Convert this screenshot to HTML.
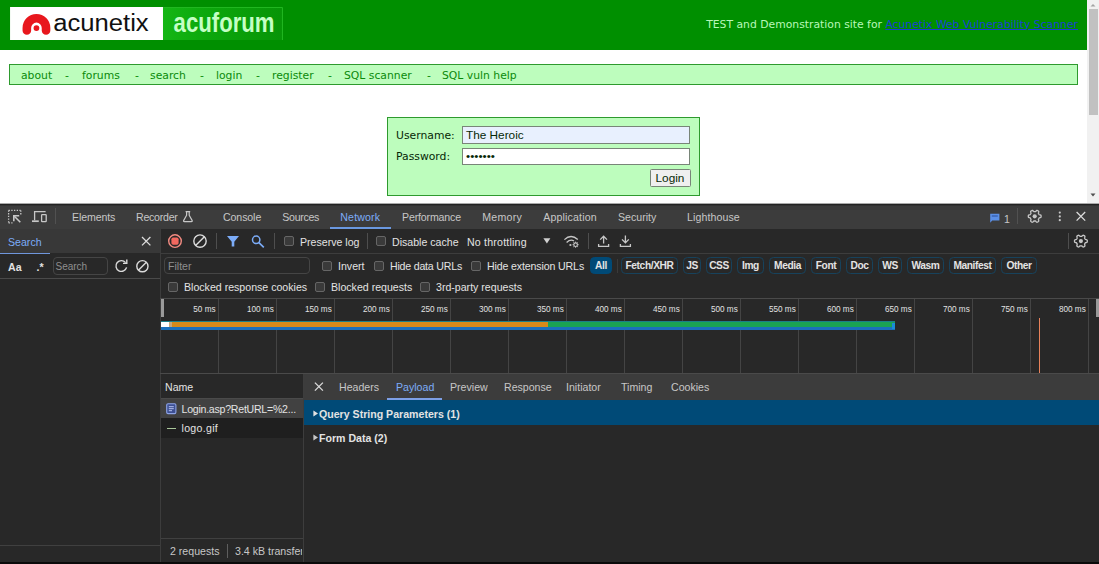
<!DOCTYPE html>
<html lang="en">
<head>
<meta charset="utf-8">
<title>acuforum login</title>
<style>
html,body{margin:0;padding:0;}
body{width:1099px;height:564px;overflow:hidden;position:relative;background:#fff;font-family:"Liberation Sans",sans-serif;}
.abs{position:absolute;}
#page{position:absolute;left:0;top:0;width:1099px;height:203px;background:#fff;overflow:hidden;font-family:"DejaVu Sans","Liberation Sans",sans-serif;font-size:10.8px;}
#hdr{position:absolute;left:0;top:0;width:1087px;height:50px;background:#008f00;}
#logo{position:absolute;left:10px;top:6.5px;width:273px;height:33.2px;}
#disc{position:absolute;right:9px;top:17.5px;white-space:pre;color:#b9f7b9;line-height:13px;}
#disc a{color:#1a3fd6;text-decoration:underline;}
#nav{position:absolute;left:9px;top:64px;width:1067px;height:19px;border:1px solid #2e9a2e;background:#bdfdbd;color:#0a8a0a;line-height:19px;white-space:pre;}
#nav span{position:absolute;top:1px;}
#login{position:absolute;left:387px;top:117px;width:311px;height:77px;border:1px solid #2e9a2e;background:#bdfdbd;color:#062806;}
#login label{position:absolute;left:8px;line-height:13px;}
.inp{position:absolute;left:74px;width:223px;height:15px;border:1px solid #788578;background:#fff;font-family:"Liberation Sans",sans-serif;font-size:11.8px;line-height:15px;padding-left:3px;box-sizing:content-box;white-space:pre;}
#btn{position:absolute;left:261.5px;top:51px;width:39px;height:16px;border:1px solid #788578;border-radius:1.5px;background:#efefef;font-family:"Liberation Sans",sans-serif;font-size:11.8px;line-height:16px;text-align:center;}
#sb{position:absolute;left:1087px;top:0;width:12px;height:203px;background:#f1f1f1;}
#sb i{position:absolute;left:2px;top:9px;width:9px;height:106px;background:#c1c1c1;}

#dt{position:absolute;left:0;top:203px;width:1099px;height:361px;background:#282828;color:#e3e3e3;font-size:10.6px;overflow:hidden;}
#dt .t{position:absolute;white-space:pre;line-height:14px;height:14px;}
#tabs{position:absolute;left:0;top:1px;width:1099px;height:24px;background:#3c3c3c;}
.vsep{position:absolute;width:1px;background:#5a5a5a;}
.hline{position:absolute;height:1px;background:#4a4a4a;}
.cb{position:absolute;width:8.5px;height:8.5px;border:1px solid #666;border-radius:2px;background:#3a3a3a;}
.chip{position:absolute;top:53.7px;height:15.3px;border:1px solid #17425c;border-radius:4.5px;line-height:16.4px;text-align:center;font-weight:bold;font-size:10.2px;letter-spacing:-0.4px;color:#e3e3e3;white-space:pre;}
.ibox{position:absolute;border:1px solid #454545;border-radius:4px;box-sizing:border-box;}
.ibox .ph{position:absolute;left:3px;top:0;line-height:14px;color:#8f8f8f;font-size:10.6px;}
</style>
</head>
<body>
<div id="page">
  <div id="hdr">
    <svg id="logo" viewBox="10 6.5 273 33.2">
      <defs><linearGradient id="lg" x1="0" x2="1" y1="0" y2="0"><stop offset="0" stop-color="#14b614"/><stop offset="0.35" stop-color="#0ca80c"/><stop offset="1" stop-color="#079407"/></linearGradient></defs>
      <rect x="10" y="6.5" width="153" height="33.2" fill="#fff"/>
      <rect x="163" y="6.5" width="120" height="33.2" fill="url(#lg)"/>
      <path d="M163 7 H282.5 V39.7" fill="none" stroke="#22b822" stroke-width="1"/>
      <path d="M26.8 30 V27.4 a9.6 9.6 0 0 1 19.2 0 V30" fill="none" stroke="#e8171d" stroke-width="8.6" stroke-linecap="round"/>
      <circle cx="36.4" cy="27.6" r="2.9" fill="#e8171d"/>
      <text x="53.2" y="31" font-family="Liberation Sans, sans-serif" font-size="24.5" fill="#111" textLength="95.5" lengthAdjust="spacingAndGlyphs">acunetix</text>
      <text x="173.6" y="31.7" font-family="Liberation Sans, sans-serif" font-weight="bold" font-size="27" fill="#c4ffc4" textLength="101" lengthAdjust="spacingAndGlyphs">acuforum</text>
    </svg>
    <div id="disc">TEST and Demonstration site for <a>Acunetix Web Vulnerability Scanner</a></div>
  </div>
  <div id="nav"><span style="left:11px">about</span><span style="left:55px">-</span><span style="left:72px">forums</span><span style="left:125px">-</span><span style="left:140px">search</span><span style="left:190px">-</span><span style="left:206px">login</span><span style="left:246px">-</span><span style="left:262px">register</span><span style="left:318px">-</span><span style="left:334px">SQL scanner</span><span style="left:417px">-</span><span style="left:432px">SQL vuln help</span></div>
  <div id="login">
    <label style="top:11px">Username:</label>
    <label style="top:32px">Password:</label>
    <div class="inp" style="top:8.4px;height:15.6px;line-height:16px;background:#e8f0fe">The Heroic</div>
    <div class="inp" style="top:30px">•••••••</div>
    <div id="btn">Login</div>
  </div>
  <div id="sb"><i></i>
    <svg class="abs" style="left:0;top:0" width="12" height="203"><path d="M3.5 6.5 L6 4 L8.5 6.5Z" fill="#a3a3a3"/><path d="M3.5 193.5 L8.5 193.5 L6 196.5Z" fill="#505050"/></svg>
  </div>
</div>

<div id="dt">
<!--DT-->
<i class="abs" style="left:0px;top:0px;width:1099px;height:1px;background:#a9a9a9;"></i>
<i class="abs" style="left:0px;top:1px;width:1099px;height:1px;background:#232323;"></i>
<i class="abs" style="left:0px;top:2px;width:1099px;height:1px;background:#323232;"></i>
<i class="abs" style="left:0px;top:3px;width:1099px;height:23px;background:#3c3c3c;"></i>
<span class="t" style="left:72px;top:7px;color:#c7c7c7;letter-spacing:-0.12px">Elements</span>
<span class="t" style="left:136px;top:7px;color:#c7c7c7;letter-spacing:-0.25px">Recorder</span>
<span class="t" style="left:223px;top:7px;color:#c7c7c7;letter-spacing:-0.1px">Console</span>
<span class="t" style="left:282.3px;top:7px;color:#c7c7c7;letter-spacing:-0.3px">Sources</span>
<span class="t" style="left:402px;top:7px;color:#c7c7c7;letter-spacing:-0.15px">Performance</span>
<span class="t" style="left:482.3px;top:7px;color:#c7c7c7;letter-spacing:0.25px">Memory</span>
<span class="t" style="left:543.3px;top:7px;color:#c7c7c7;letter-spacing:0.15px">Application</span>
<span class="t" style="left:618px;top:7px;color:#c7c7c7;letter-spacing:0px">Security</span>
<span class="t" style="left:687px;top:7px;color:#c7c7c7;letter-spacing:0.1px">Lighthouse</span>
<span class="t" style="left:340.3px;top:7px;color:#7cacf8;letter-spacing:0.15px">Network</span>
<i class="hline" style="left:330px;top:24px;width:61px;height:2px;background:#6a98e0"></i>
<i class="vsep" style="left:55px;top:5px;height:16px;background:#515151"></i>
<span class="t" style="left:1004px;top:8.5px;color:#c7c7c7;">1</span>
<i class="vsep" style="left:1017px;top:5px;height:16px;background:#515151"></i>
<i class="abs" style="left:0px;top:26px;width:160px;height:24px;background:#383838;"></i>
<i class="abs" style="left:160px;top:26px;width:939px;height:24px;background:#282828;"></i>
<span class="t" style="left:8px;top:32px;color:#7cacf8;">Search</span>
<i class="hline" style="left:0px;top:50px;width:50px;height:1px;background:#6f96dc"></i>
<i class="hline" style="left:160px;top:50px;width:939px;height:1px;background:#3d3d3d"></i>
<i class="vsep" style="left:160px;top:26px;height:335px;background:#3c3c3c"></i>
<i class="vsep" style="left:216px;top:30px;height:16px;background:#4e4e4e"></i>
<i class="vsep" style="left:274px;top:30px;height:16px;background:#4e4e4e"></i>
<i class="vsep" style="left:367px;top:30px;height:16px;background:#4e4e4e"></i>
<i class="vsep" style="left:588px;top:30px;height:16px;background:#4e4e4e"></i>
<i class="vsep" style="left:1068px;top:30px;height:16px;background:#4e4e4e"></i>
<i class="cb" style="left:283.75px;top:32.75px"></i>
<span class="t" style="left:300px;top:32px;color:#e3e3e3;">Preserve log</span>
<i class="cb" style="left:375.75px;top:32.75px"></i>
<span class="t" style="left:392px;top:32px;color:#e3e3e3;">Disable cache</span>
<span class="t" style="left:467px;top:32px;color:#e3e3e3;letter-spacing:0.2px">No throttling</span>
<span class="t" style="left:8px;top:57px;color:#e3e3e3;font-weight:bold">Aa</span>
<span class="t" style="left:36.5px;top:56.5px;color:#e3e3e3;font-weight:bold">.*</span>
<span class="ibox" style="left:52.5px;top:54px;width:55px;height:17.5px"><span class="ph" style="font-size:10px;left:2px;top:1.5px">Search</span></span>
<span class="ibox" style="left:164px;top:53.5px;width:146px;height:17px"><span class="ph" style="top:1px">Filter</span></span>
<i class="hline" style="left:0px;top:75px;width:160px;height:1px;background:#4a4a4a"></i>
<i class="cb" style="left:321.75px;top:57.75px"></i>
<span class="t" style="left:338px;top:56px;color:#e3e3e3;">Invert</span>
<i class="cb" style="left:373.75px;top:57.75px"></i>
<span class="t" style="left:390px;top:56px;color:#e3e3e3;letter-spacing:-0.2px">Hide data URLs</span>
<i class="cb" style="left:470.75px;top:57.75px"></i>
<span class="t" style="left:487px;top:56px;color:#e3e3e3;letter-spacing:-0.13px">Hide extension URLs</span>
<i class="vsep" style="left:617px;top:56px;height:14px;background:#3a3a3a"></i>
<span class="chip" style="left:590px;width:20px;background:#004a77;border-color:#004a77;">All</span>
<span class="chip" style="left:621px;width:55px;">Fetch/XHR</span>
<span class="chip" style="left:683px;width:16px;">JS</span>
<span class="chip" style="left:706px;width:24px;">CSS</span>
<span class="chip" style="left:737px;width:25px;">Img</span>
<span class="chip" style="left:769px;width:35px;">Media</span>
<span class="chip" style="left:811px;width:28px;">Font</span>
<span class="chip" style="left:846px;width:25px;">Doc</span>
<span class="chip" style="left:878px;width:22px;">WS</span>
<span class="chip" style="left:907px;width:35px;">Wasm</span>
<span class="chip" style="left:949px;width:45px;">Manifest</span>
<span class="chip" style="left:1001px;width:34px;">Other</span>
<i class="cb" style="left:167.75px;top:78.75px"></i>
<span class="t" style="left:184px;top:77px;color:#e3e3e3;">Blocked response cookies</span>
<i class="cb" style="left:314.75px;top:78.75px"></i>
<span class="t" style="left:331px;top:77px;color:#e3e3e3;">Blocked requests</span>
<i class="cb" style="left:419.75px;top:78.75px"></i>
<span class="t" style="left:436px;top:77px;color:#e3e3e3;">3rd-party requests</span>
<i class="hline" style="left:160px;top:95px;width:939px;height:1px;background:#4a4a4a"></i>
<i class="abs" style="left:161px;top:96px;width:3px;height:18px;background:#9a9a9a;"></i>
<i class="abs" style="left:1096px;top:96px;width:3px;height:18px;background:#9a9a9a;"></i>
<i class="vsep" style="left:218px;top:96px;height:74px;background:#444444"></i>
<span class="t" style="left:0px;top:99px;color:#e3e3e3;left:auto;right:883px;font-size:9.4px;transform:scaleX(0.87);transform-origin:100% 50%">50 ms</span>
<i class="vsep" style="left:276px;top:96px;height:74px;background:#444444"></i>
<span class="t" style="left:0px;top:99px;color:#e3e3e3;left:auto;right:825px;font-size:9.4px;transform:scaleX(0.87);transform-origin:100% 50%">100 ms</span>
<i class="vsep" style="left:334px;top:96px;height:74px;background:#444444"></i>
<span class="t" style="left:0px;top:99px;color:#e3e3e3;left:auto;right:767px;font-size:9.4px;transform:scaleX(0.87);transform-origin:100% 50%">150 ms</span>
<i class="vsep" style="left:392px;top:96px;height:74px;background:#444444"></i>
<span class="t" style="left:0px;top:99px;color:#e3e3e3;left:auto;right:709px;font-size:9.4px;transform:scaleX(0.87);transform-origin:100% 50%">200 ms</span>
<i class="vsep" style="left:450px;top:96px;height:74px;background:#444444"></i>
<span class="t" style="left:0px;top:99px;color:#e3e3e3;left:auto;right:651px;font-size:9.4px;transform:scaleX(0.87);transform-origin:100% 50%">250 ms</span>
<i class="vsep" style="left:508px;top:96px;height:74px;background:#444444"></i>
<span class="t" style="left:0px;top:99px;color:#e3e3e3;left:auto;right:593px;font-size:9.4px;transform:scaleX(0.87);transform-origin:100% 50%">300 ms</span>
<i class="vsep" style="left:566px;top:96px;height:74px;background:#444444"></i>
<span class="t" style="left:0px;top:99px;color:#e3e3e3;left:auto;right:535px;font-size:9.4px;transform:scaleX(0.87);transform-origin:100% 50%">350 ms</span>
<i class="vsep" style="left:624px;top:96px;height:74px;background:#444444"></i>
<span class="t" style="left:0px;top:99px;color:#e3e3e3;left:auto;right:477px;font-size:9.4px;transform:scaleX(0.87);transform-origin:100% 50%">400 ms</span>
<i class="vsep" style="left:682px;top:96px;height:74px;background:#444444"></i>
<span class="t" style="left:0px;top:99px;color:#e3e3e3;left:auto;right:419px;font-size:9.4px;transform:scaleX(0.87);transform-origin:100% 50%">450 ms</span>
<i class="vsep" style="left:740px;top:96px;height:74px;background:#444444"></i>
<span class="t" style="left:0px;top:99px;color:#e3e3e3;left:auto;right:361px;font-size:9.4px;transform:scaleX(0.87);transform-origin:100% 50%">500 ms</span>
<i class="vsep" style="left:798px;top:96px;height:74px;background:#444444"></i>
<span class="t" style="left:0px;top:99px;color:#e3e3e3;left:auto;right:303px;font-size:9.4px;transform:scaleX(0.87);transform-origin:100% 50%">550 ms</span>
<i class="vsep" style="left:856px;top:96px;height:74px;background:#444444"></i>
<span class="t" style="left:0px;top:99px;color:#e3e3e3;left:auto;right:245px;font-size:9.4px;transform:scaleX(0.87);transform-origin:100% 50%">600 ms</span>
<i class="vsep" style="left:914px;top:96px;height:74px;background:#444444"></i>
<span class="t" style="left:0px;top:99px;color:#e3e3e3;left:auto;right:187px;font-size:9.4px;transform:scaleX(0.87);transform-origin:100% 50%">650 ms</span>
<i class="vsep" style="left:972px;top:96px;height:74px;background:#444444"></i>
<span class="t" style="left:0px;top:99px;color:#e3e3e3;left:auto;right:129px;font-size:9.4px;transform:scaleX(0.87);transform-origin:100% 50%">700 ms</span>
<i class="vsep" style="left:1030px;top:96px;height:74px;background:#444444"></i>
<span class="t" style="left:0px;top:99px;color:#e3e3e3;left:auto;right:71px;font-size:9.4px;transform:scaleX(0.87);transform-origin:100% 50%">750 ms</span>
<i class="vsep" style="left:1088px;top:96px;height:74px;background:#444444"></i>
<span class="t" style="left:0px;top:99px;color:#e3e3e3;left:auto;right:13px;font-size:9.4px;transform:scaleX(0.87);transform-origin:100% 50%">800 ms</span>
<i class="abs" style="left:161px;top:118px;width:734px;height:1px;background:#1a7f8a;"></i>
<i class="abs" style="left:161px;top:119px;width:387px;height:5px;background:#d68a1a;"></i>
<i class="abs" style="left:548px;top:119px;width:347px;height:5px;background:#1aa354;"></i>
<i class="abs" style="left:161px;top:124px;width:734px;height:3px;background:#1a70bd;"></i>
<i class="abs" style="left:161px;top:119px;width:8px;height:5px;background:#ffffff;"></i>
<i class="abs" style="left:169px;top:119px;width:3px;height:5px;background:#c9a77a;"></i>
<i class="abs" style="left:892px;top:120px;width:3px;height:6px;background:#1a8cd8;"></i>
<i class="abs" style="left:1039px;top:115px;width:1px;height:55px;background:#e8825a;"></i>
<i class="hline" style="left:160px;top:170px;width:939px;height:1px;background:#4a4a4a"></i>
<i class="abs" style="left:161px;top:171px;width:142px;height:24px;background:#282828;"></i>
<span class="t" style="left:165px;top:177px;color:#e3e3e3;">Name</span>
<i class="hline" style="left:161px;top:195px;width:142px;height:1px;background:#4a4a4a"></i>
<i class="abs" style="left:161px;top:196px;width:142px;height:19px;background:#414141;"></i>
<i class="abs" style="left:161px;top:215px;width:142px;height:20px;background:#1f1f1f;"></i>
<span class="t" style="left:181.5px;top:198.5px;color:#e3e3e3;letter-spacing:-0.25px">Login.asp?RetURL=%2...</span>
<span class="t" style="left:181.5px;top:218px;color:#e3e3e3;letter-spacing:0.3px">logo.gif</span>
<i class="abs" style="left:167px;top:225px;width:9px;height:1px;background:#a9c79a;"></i>
<i class="vsep" style="left:303px;top:171px;height:190px;background:#3d3d3d"></i>
<i class="abs" style="left:304px;top:171px;width:795px;height:26px;background:#3c3c3c;"></i>
<span class="t" style="left:339px;top:177px;color:#c7c7c7;">Headers</span>
<span class="t" style="left:450px;top:177px;color:#c7c7c7;">Preview</span>
<span class="t" style="left:504px;top:177px;color:#c7c7c7;">Response</span>
<span class="t" style="left:566px;top:177px;color:#c7c7c7;">Initiator</span>
<span class="t" style="left:621px;top:177px;color:#c7c7c7;">Timing</span>
<span class="t" style="left:671px;top:177px;color:#c7c7c7;">Cookies</span>
<span class="t" style="left:396px;top:177px;color:#7cacf8;">Payload</span>
<i class="hline" style="left:387px;top:195px;width:55px;height:2px;background:#7d9fe6"></i>
<i class="abs" style="left:304px;top:197px;width:795px;height:25px;background:#004a77;"></i>
<span class="t" style="left:319px;top:204px;color:#e3e3e3;font-weight:bold">Query String Parameters (1)</span>
<span class="t" style="left:319px;top:228px;color:#e3e3e3;font-weight:bold">Form Data (2)</span>
<i class="hline" style="left:0px;top:342px;width:160px;height:1px;background:#404040"></i>
<i class="hline" style="left:161px;top:335px;width:142px;height:1px;background:#404040"></i>
<span class="t" style="left:170px;top:341px;color:#c7c7c7;">2 requests</span>
<i class="vsep" style="left:227px;top:341px;height:14px;background:#5e5e5e"></i>
<span class="t" style="left:235px;top:341px;color:#c7c7c7;width:67px;overflow:hidden">3.4 kB transferred</span>
<i class="abs" style="left:0px;top:359px;width:1099px;height:2px;background:#0a0a0a;"></i>
<!--/DT-->
<!--ICONS-->
<svg class="abs" style="left:0;top:0" width="1099" height="361" viewBox="0 203 1099 361" fill="none" stroke-linecap="butt">
<g stroke="#c7c7c7" stroke-width="1.3"><path d="M8.6 210.4 H20.8" stroke-dasharray="1.3 1.4"/><path d="M8.6 210.4 V222.8" stroke-dasharray="1.3 1.4"/><path d="M20.8 210.4 V214.5" stroke-dasharray="1.3 1.4"/><path d="M8.6 222.8 H12.5" stroke-dasharray="1.3 1.4"/><path d="M20.3 222.3 L14.3 216.3" stroke-width="1.6"/><path d="M13.8 221.2 V215.8 H19.2" stroke-width="1.6"/></g>
<g stroke="#c7c7c7" stroke-width="1.3"><path d="M34.6 220.2 V211.7 H45.6"/><path d="M32 221.2 H38.8" stroke-width="1.7"/><rect x="41.6" y="214.6" width="4.6" height="7" rx="0.6"/></g>
<path d="M185.6 211.6 H190.2 M186.6 211.6 V215.2 L183.6 220.6 Q183.3 221.6 184.4 221.6 H191.4 Q192.5 221.6 192.2 220.6 L189.2 215.2 V211.6" stroke="#c7c7c7" stroke-width="1.2" stroke-linejoin="round"/>
<path d="M990.2 213.8 H999.4 V220.6 H992.2 L990.2 222.8 Z" fill="#5b8fe6"/><path d="M991.8 216 H997.8" stroke="#2b4f9a" stroke-width="1"/>
<path d="M1034.70 211.60 L1035.11 211.62 L1035.53 211.59 L1036.14 210.94 L1036.86 210.37 L1037.40 210.50 L1037.90 210.76 L1038.37 211.06 L1038.76 211.46 L1038.62 212.38 L1038.37 213.22 L1038.55 213.60 L1038.77 213.95 L1038.96 214.31 L1039.20 214.66 L1040.06 214.86 L1040.92 215.20 L1041.08 215.74 L1041.10 216.30 L1041.08 216.86 L1040.92 217.40 L1040.06 217.74 L1039.20 217.94 L1038.96 218.29 L1038.77 218.65 L1038.55 219.00 L1038.37 219.38 L1038.62 220.22 L1038.76 221.14 L1038.37 221.54 L1037.90 221.84 L1037.40 222.10 L1036.86 222.23 L1036.14 221.66 L1035.53 221.01 L1035.11 220.98 L1034.70 221.00 L1034.29 220.98 L1033.87 221.01 L1033.26 221.66 L1032.54 222.23 L1032.00 222.10 L1031.50 221.84 L1031.03 221.54 L1030.64 221.14 L1030.78 220.22 L1031.03 219.38 L1030.85 219.00 L1030.63 218.65 L1030.44 218.29 L1030.20 217.94 L1029.34 217.74 L1028.48 217.40 L1028.32 216.86 L1028.30 216.30 L1028.32 215.74 L1028.48 215.20 L1029.34 214.86 L1030.20 214.66 L1030.44 214.31 L1030.63 213.95 L1030.85 213.60 L1031.03 213.22 L1030.78 212.38 L1030.64 211.46 L1031.03 211.06 L1031.50 210.76 L1032.00 210.50 L1032.54 210.37 L1033.26 210.94 L1033.87 211.59 L1034.29 211.62Z" stroke="#c7c7c7" stroke-width="1.3" stroke-linejoin="round"/><circle cx="1034.7" cy="216.3" r="2.1" fill="#c7c7c7"/>
<path d="M1080.90 236.40 L1081.31 236.42 L1081.73 236.39 L1082.34 235.74 L1083.06 235.17 L1083.60 235.30 L1084.10 235.56 L1084.57 235.86 L1084.96 236.26 L1084.82 237.18 L1084.57 238.02 L1084.75 238.40 L1084.97 238.75 L1085.16 239.11 L1085.40 239.46 L1086.26 239.66 L1087.12 240.00 L1087.28 240.54 L1087.30 241.10 L1087.28 241.66 L1087.12 242.20 L1086.26 242.54 L1085.40 242.74 L1085.16 243.09 L1084.97 243.45 L1084.75 243.80 L1084.57 244.18 L1084.82 245.02 L1084.96 245.94 L1084.57 246.34 L1084.10 246.64 L1083.60 246.90 L1083.06 247.03 L1082.34 246.46 L1081.73 245.81 L1081.31 245.78 L1080.90 245.80 L1080.49 245.78 L1080.07 245.81 L1079.46 246.46 L1078.74 247.03 L1078.20 246.90 L1077.70 246.64 L1077.23 246.34 L1076.84 245.94 L1076.98 245.02 L1077.23 244.18 L1077.05 243.80 L1076.83 243.45 L1076.64 243.09 L1076.40 242.74 L1075.54 242.54 L1074.68 242.20 L1074.52 241.66 L1074.50 241.10 L1074.52 240.54 L1074.68 240.00 L1075.54 239.66 L1076.40 239.46 L1076.64 239.11 L1076.83 238.75 L1077.05 238.40 L1077.23 238.02 L1076.98 237.18 L1076.84 236.26 L1077.23 235.86 L1077.70 235.56 L1078.20 235.30 L1078.74 235.17 L1079.46 235.74 L1080.07 236.39 L1080.49 236.42Z" stroke="#c7c7c7" stroke-width="1.3" stroke-linejoin="round"/><circle cx="1080.9" cy="241.1" r="2.1" fill="#c7c7c7"/>
<g fill="#c7c7c7"><circle cx="1059.8" cy="212.6" r="1.1"/><circle cx="1059.8" cy="216.4" r="1.1"/><circle cx="1059.8" cy="220.2" r="1.1"/></g>
<path d="M1076.6 212 L1085.2 220.6 M1085.2 212 L1076.6 220.6" stroke="#dcdcdc" stroke-width="1.3"/>
<path d="M142 237 L150.4 245.4 M150.4 237 L142 245.4" stroke="#dcdcdc" stroke-width="1.3"/>
<circle cx="175" cy="241.1" r="6.3" stroke="#f28b82" stroke-width="1.4"/><rect x="171.4" y="237.5" width="7.2" height="7.2" rx="1.8" fill="#f2685f"/>
<circle cx="200" cy="241.1" r="6.2" stroke="#dcdcdc" stroke-width="1.4"/><path d="M195.6 245.5 L204.4 236.7" stroke="#dcdcdc" stroke-width="1.4"/>
<path d="M227 236 H239 L234.3 241.8 V246.4 H231.7 V241.8 Z" fill="#7cacf8"/>
<circle cx="256.2" cy="239.8" r="3.7" stroke="#7cacf8" stroke-width="1.5"/><path d="M258.9 242.6 L263.8 247.4" stroke="#7cacf8" stroke-width="1.6"/>
<path d="M543.4 238.2 H550.4 L546.9 243.6 Z" fill="#d0d0d0"/>
<g stroke="#c7c7c7" stroke-width="1.3"><path d="M564.4 239.6 Q571 233.4 577.8 239.6"/><path d="M566.6 242.4 Q570.6 238.8 574 241"/></g><circle cx="570.4" cy="245" r="1.1" fill="#c7c7c7"/><circle cx="575.6" cy="244.7" r="1.8" stroke="#c7c7c7" stroke-width="1.1"/><path d="M575.6 241.6 V242.9 M575.6 246.5 V247.8 M572.5 244.7 H573.8 M577.4 244.7 H578.7 M573.4 242.5 L574.3 243.4 M577.8 242.5 L576.9 243.4 M573.4 246.9 L574.3 246 M577.8 246.9 L576.9 246" stroke="#c7c7c7" stroke-width="0.9"/>
<g stroke="#c7c7c7" stroke-width="1.3"><path d="M603.6 243.6 V236.2 M600.2 239.6 L603.6 236.2 L607 239.6"/><path d="M598.6 244 V246.4 H608.6 V244"/></g>
<g stroke="#c7c7c7" stroke-width="1.3"><path d="M625.4 235.4 V242.8 M622 239.4 L625.4 242.8 L628.8 239.4"/><path d="M620.4 244 V246.4 H630.4 V244"/></g>
<path d="M125.6 262.6 A5.4 5.4 0 1 0 126.6 267.4" stroke="#dcdcdc" stroke-width="1.4"/><path d="M126.8 259.6 V263.4 H123" stroke="#dcdcdc" stroke-width="1.4"/>
<circle cx="142.4" cy="266.2" r="5.6" stroke="#dcdcdc" stroke-width="1.4"/><path d="M138.4 270.2 L146.4 262.2" stroke="#dcdcdc" stroke-width="1.4"/>
<path d="M314.9 382.6 L322.9 390.6 M322.9 382.6 L314.9 390.6" stroke="#dcdcdc" stroke-width="1.3"/>
<rect x="166.7" y="403.8" width="9.2" height="9.8" rx="1.3" fill="#3d4f92" stroke="#8ea4e6" stroke-width="1.1"/><path d="M168.8 406.7 H173.8 M168.8 408.7 H173.8 M168.8 410.7 H172" stroke="#c3d0fa" stroke-width="0.9"/>
<path d="M313.4 410.4 L318 413.4 L313.4 416.4 Z" fill="#e3e3e3"/><path d="M313.4 434.4 L318 437.4 L313.4 440.4 Z" fill="#c7c7c7"/>
</svg>
<!--/ICONS-->
</div>
</body>
</html>
